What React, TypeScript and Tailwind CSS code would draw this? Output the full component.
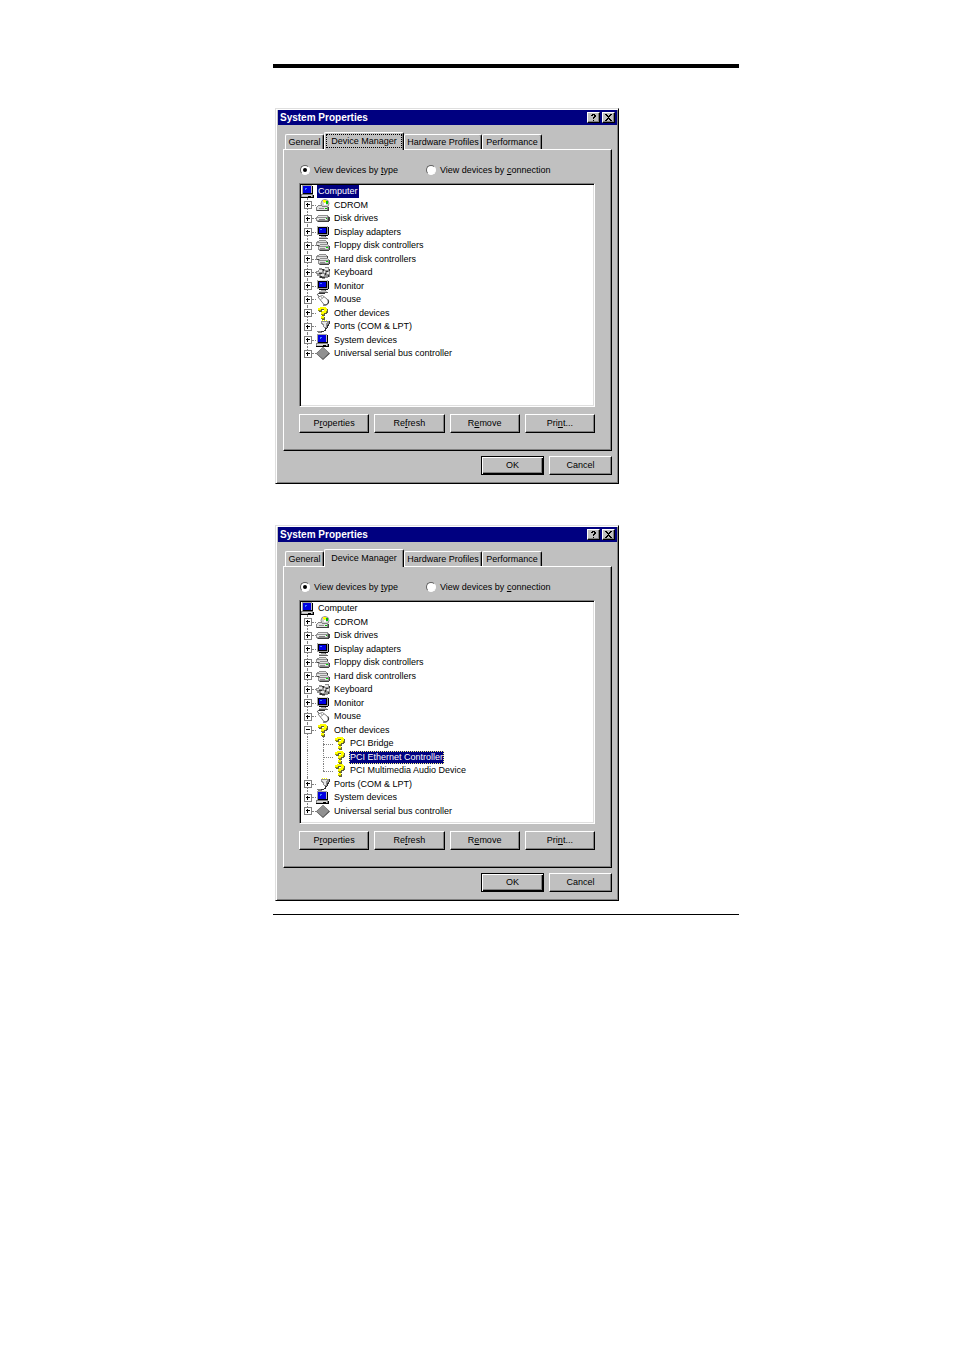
import { useId, useState } from 'react';
import type { ReactNode } from 'react';
import clsx from 'clsx';

type IconName =
  | 'computer' | 'cdrom' | 'disk' | 'monitor' | 'floppy' | 'keyboard'
  | 'mouse' | 'unknown' | 'port' | 'usb';

interface DeviceNode {
  label: string;
  icon: IconName;
  level: 0 | 1 | 2;
  open?: boolean;
}

const devices: DeviceNode[] = [
  { label: 'Computer', icon: 'computer', level: 0 },
  { label: 'CDROM', icon: 'cdrom', level: 1 },
  { label: 'Disk drives', icon: 'disk', level: 1 },
  { label: 'Display adapters', icon: 'monitor', level: 1 },
  { label: 'Floppy disk controllers', icon: 'floppy', level: 1 },
  { label: 'Hard disk controllers', icon: 'floppy', level: 1 },
  { label: 'Keyboard', icon: 'keyboard', level: 1 },
  { label: 'Monitor', icon: 'monitor', level: 1 },
  { label: 'Mouse', icon: 'mouse', level: 1 },
  { label: 'Other devices', icon: 'unknown', level: 1 },
  { label: 'Ports (COM & LPT)', icon: 'port', level: 1 },
  { label: 'System devices', icon: 'computer', level: 1 },
  { label: 'Universal serial bus controller', icon: 'usb', level: 1 },
];

const expandedDevices: DeviceNode[] = [
  ...devices.slice(0, 9),
  { ...devices[9], open: true },
  { label: 'PCI Bridge', icon: 'unknown', level: 2 },
  { label: 'PCI Ethernet Controller', icon: 'unknown', level: 2 },
  { label: 'PCI Multimedia Audio Device', icon: 'unknown', level: 2 },
  ...devices.slice(10),
];

const drawings: Record<IconName, ReactNode> = {
  computer: (
    <>
      <path fill="#a0a0a0" d="M1 0h10v9H1z" />
      <path fill="#000" d="M11 1h1v8H2V8h9z" />
      <path fill="#0000e0" d="M2 1h8v7H2z" />
      <path fill="#c0c0c0" d="M10 1h1v7h-1z" />
      <path fill="#4080ff" d="M4 3h2v1H5v1H4z" />
      <path fill="#808080" d="M0 9h12v3H0z" />
      <path fill="#dfdfdf" d="M1 10h10v1H1z" />
      <path fill="#c0c0c0" d="M1 11h10v1H1z" />
      <path fill="#000" d="M12 10h1v3H0v-1h12zM7 11h3v1H7z" />
    </>
  ),
  monitor: (
    <>
      <path fill="#a0a0a0" d="M1 0h11v9H1z" />
      <path fill="#dfdfdf" d="M2 0h9v1H2z" />
      <path fill="#000" d="M12 1h1v8h-1v1H3V9h9zM2 1h9v7H2z" />
      <path fill="#0000e0" d="M3 2h7v5H3z" />
      <path fill="#4080ff" d="M4 3h2v1H4z" />
      <path fill="#a0a0a0" d="M5 10h4v1H5z" />
      <path fill="#c0c0c0" d="M3 11h8v1H3z" />
      <path fill="#606060" d="M3 12h9v1H3zM9 10h1v1H9z" />
    </>
  ),
  cdrom: (
    <>
      <circle cx="9" cy="4.500" r="4" fill="#d0d0d0" stroke="#909090" shapeRendering="auto" />
      <path fill="#ffff00" d="M7 1h3v2H9v1H8V3H7z" />
      <path fill="#00c000" d="M10 2h2v3h-2z" />
      <path fill="#fff" d="M8 4h2v2H8z" />
      <path fill="#808080" d="M2 6h4v1h5v1h2v4H0V8h1V7h1z" />
      <path fill="#dfdfdf" d="M2 7h4v1h5v1H1V8h1zM1 9h10v2H1z" />
      <path fill="#404040" d="M12 8h1v4H1v-1h11z" />
      <path fill="#909090" d="M3 9h5v1H3z" />
      <path fill="#00c000" d="M9 9h2v1H9z" />
    </>
  ),
  disk: (
    <>
      <path fill="#909090" d="M2 3h10v1h1v5h-1v1H1V9H0V5h1V4h1z" />
      <path fill="#e8e8e8" d="M2 4h9v1H2zM1 6h10v2H1z" />
      <path fill="#404040" d="M13 5h1v4h-1v1H2V9h10V5z" />
      <path fill="#808080" d="M3 7h6v1H3z" />
      <path fill="#00c000" d="M10 6h1v1h-1z" />
    </>
  ),
  floppy: (
    <>
      <path fill="#909090" d="M3 1h7v1h1v1h1v4H0V3h1V2h2z" />
      <path fill="#dfdfdf" d="M3 2h7v1H3zM1 4h10v2H1z" />
      <path fill="#404040" d="M11 3h1v4H1V6h10z" />
      <path fill="#909090" d="M4 5h8v1h1v1h1v4h-1v1H3v-1H2V7h1V6h1z" />
      <path fill="#dfdfdf" d="M4 6h8v1H4zM3 8h9v2H3z" />
      <path fill="#404040" d="M13 7h1v4h-1v1H4v-1h9z" />
      <path fill="#909090" d="M4 9h5v1H4z" />
      <path fill="#00e000" d="M10 8h2v1h-2z" />
    </>
  ),
  keyboard: (
    <>
      <path fill="#909090" d="M3 2h3v1h3V1h4v2h1v8h-2v1H9v1H6v-1H3v-2H1V8H0V5h2V4h1z" />
      <path fill="#e8e8e8" d="M3 4h3v2H3zM9 2h3v2H9zM11 6h2v2h-2zM5 8h3v2H5zM8 5h1v2H8zM1 6h2v1H1z" />
      <path fill="#303030" d="M6 3h2v1H6zM3 7h3v1H3zM7 4h1v1H7zM10 5h2v1h-2zM9 7h1v2H9zM4 10h2v1h3v1H4zM12 9h1v2h-1zM13 3h1v2h-1z" />
    </>
  ),
  mouse: (
    <g shapeRendering="auto">
      <path fill="none" stroke="#303030" d="M9 .5H3C1 .5 1 2.500 3 3" />
      <path fill="#fff" stroke="#808080" d="M2 4l4.500-1.500L11 6c2.500 3 .5 6.500-3 5.500z" />
      <path fill="none" stroke="#a0a0a0" d="M4 7l4-3M6.500 5.500L5 3.500" />
      <path fill="none" stroke="#303030" d="M7 12c4 1 7-2 5-5.500" />
    </g>
  ),
  unknown: (
    <>
      <path fill="#606040" d="M5 1h6v1h1v4h-1v1H9v2H6V6h1V5h2V3H6v2H3V2h2zM6 10h3v3H6z" />
      <path fill="#ffff00" d="M4 0h6v1h1v4h-1v1H8v2H5V5h1V4h2V2H5v2H2V1h2zM5 9h3v3H5z" />
      <path fill="#a0a000" d="M2 3h3v1H2zM5 7h3v1H5zM5 11h3v1H5zM10 4h1v1h-1z" />
    </>
  ),
  port: (
    <>
      <path fill="#909090" d="M5 1h8v3h-1v3h-1v1H8V7H7V5H6V4H5z" />
      <path fill="#e8e8e8" d="M6 2h5v1H6zM7 3h3v1H7zM8 4h2v3H8z" />
      <path fill="#ffff00" d="M6 0h1v1H6zM8 0h1v1H8zM10 0h1v1h-1z" />
      <path fill="#303030" d="M13 1h1v3h-1zM12 4h1v2h-1v2h-1V5h1zM9 8h2v1h-1v2H8v1H5v-1h3v-1h1z" />
      <path fill="#808080" d="M1 11h4v1H1zM2 12h4v1H2z" />
    </>
  ),
  usb: (
    <g shapeRendering="auto">
      <path fill="#404040" d="M7 0l7 6.500L7 13 0 6.500z" />
      <path fill="#909090" d="M7 0l6 6-6 6-6.500-5.500z" />
    </g>
  ),
};

const DeviceIcon = ({ name }: { name: IconName }) => (
  <svg viewBox="0 0 14 13" shapeRendering="crispEdges" className="h-[13px] w-[14px] shrink-0" aria-hidden="true">
    {drawings[name]}
  </svg>
);

interface TreeRowProps {
  node: DeviceNode;
  isLast: boolean;
  isLastChild: boolean;
  selected: boolean;
  focused: boolean;
  onSelect: () => void;
}

const TreeRow = ({ node, isLast, isLastChild, selected, focused, onSelect }: TreeRowProps) => (
  <li className="flex items-center odd:h-[13px] even:h-[14px]">
    {node.level > 0 && (
      <span className="relative flex w-[15px] shrink-0 items-center self-stretch pl-[3px]">
        <span className={clsx('absolute top-0 left-[6px] border-l border-dotted border-[#808080]', isLast ? 'h-1/2' : 'h-full')} />
        {node.level === 1 && (
          <>
            <span className="absolute right-0 left-[11px] border-t border-dotted border-[#808080]" />
            <svg viewBox="0 0 8 8" shapeRendering="crispEdges" className="relative size-2" aria-hidden="true">
              <path fill="#808080" d="M0 0h8v8H0z" />
              <path fill="#fff" d="M1 1h6v6H1z" />
              <path fill="#000" d={node.open ? 'M2 3h4v1H2z' : 'M2 3h4v1H2zM3 2h1v4H3z'} />
            </svg>
          </>
        )}
      </span>
    )}
    {node.level === 2 && (
      <span className="relative w-[17px] shrink-0 self-stretch">
        <span className={clsx('absolute top-0 left-[7px] border-l border-dotted border-[#808080]', isLastChild ? 'h-1/2' : 'h-full')} />
        <span className="absolute top-1/2 right-0 left-[7px] border-t border-dotted border-[#808080]" />
      </span>
    )}
    <DeviceIcon name={node.icon} />
    <button
      type="button"
      onClick={onSelect}
      className={clsx(
        'h-[13px] px-px leading-[13px] whitespace-nowrap',
        node.level === 1 ? 'ml-[3px]' : 'ml-[2px]',
        selected && 'bg-[#000080] text-white',
        selected && focused && 'outline-1 -outline-offset-1 outline-dotted outline-[#ffff80]',
      )}
    >
      {node.label}
    </button>
  </li>
);

const PushButton = ({ children, isDefault = false, className }: { children: ReactNode; isDefault?: boolean; className?: string }) => (
  <button
    type="button"
    className={clsx(
      'h-[19px] border bg-[#c0c0c0] pb-px text-center leading-[16px]',
      isDefault
        ? 'border-black shadow-[inset_1px_1px_#fff,inset_-1px_-1px_#000,inset_-2px_-2px_#808080]'
        : 'border-t-white border-r-black border-b-black border-l-white shadow-[inset_-1px_-1px_#808080]',
      className,
    )}
  >
    {children}
  </button>
);

const TitleButton = ({ label, children }: { label: string; children: ReactNode }) => (
  <button
    type="button"
    aria-label={label}
    className="flex h-[11px] w-[13px] items-center justify-center border border-t-white border-r-black border-b-black border-l-white bg-[#c0c0c0] shadow-[inset_-1px_-1px_#808080]"
  >
    <svg viewBox="0 0 7 7" shapeRendering="crispEdges" className="size-[7px]" aria-hidden="true">
      {children}
    </svg>
  </button>
);

const tabs = [
  { label: 'General', width: 'w-[39px]' },
  { label: 'Device Manager', width: 'w-[80px]' },
  { label: 'Hardware Profiles', width: 'w-[78px]' },
  { label: 'Performance', width: 'w-[60px]' },
];

interface SystemPropertiesProps {
  nodes: DeviceNode[];
  initialSelected: string | null;
  tabFocused?: boolean;
}

const SystemProperties = ({ nodes, initialSelected, tabFocused = false }: SystemPropertiesProps) => {
  const [selected, setSelected] = useState(initialSelected);
  const [view, setView] = useState('type');
  const id = useId();

  const radioClass =
    "flex size-[10px] appearance-none items-center justify-center rounded-full border border-t-[#606060] border-r-white border-b-white border-l-[#606060] bg-white checked:before:size-1 checked:before:rounded-full checked:before:bg-black checked:before:content-['']";

  return (
    <section className="w-full max-w-[344px] border border-t-[#dfdfdf] border-r-black border-b-black border-l-[#dfdfdf] bg-[#c0c0c0] pt-px pr-px pb-2 pl-[2px] shadow-[inset_1px_1px_#fff,inset_-1px_-1px_#808080]">
      <header className="flex h-[15px] items-center bg-[#000080] px-[2px] text-white">
        <h2 className="flex-1 text-[10px] leading-[15px] font-bold">System Properties</h2>
        <div className="flex gap-[2px]">
          <TitleButton label="Help">
            <path fill="#000" d="M2 0h3v1h1v2H5v1H4v1H3V3h1V1H3v1H1V1h1zM3 6h1v1H3z" />
          </TitleButton>
          <TitleButton label="Close">
            <path fill="#000" d="M0 0h2v1h1v1h1V1h1V0h2v1H6v1H5v1H4v1h1v1h1v1h1v1H5V6H4V5H3v1H2v1H0V6h1V5h1V4h1V3H2V2H1V1H0z" />
          </TitleButton>
        </div>
      </header>

      <div className="px-[5px] pt-[7px]">
        <div className="flex h-[17px] items-end pl-[2px]" role="tablist">
          {tabs.map(tab => {
            const active = tab.label === 'Device Manager';
            return (
              <button
                key={tab.label}
                type="button"
                role="tab"
                aria-selected={active}
                className={clsx(
                  'flex items-center justify-center rounded-t-xs border-t border-r border-l border-t-white border-r-black border-l-white bg-[#c0c0c0] whitespace-nowrap shadow-[inset_-1px_0_#808080]',
                  active ? 'relative -mb-px h-[18px] pb-[2px]' : 'h-[15px]',
                  tab.width,
                )}
              >
                <span className={clsx('border border-dotted px-1 leading-[12px]', active && tabFocused ? 'border-black' : 'border-transparent')}>
                  {tab.label}
                </span>
              </button>
            );
          })}
        </div>

        <div className="border border-t-white border-r-black border-b-black border-l-white pt-[13px] pr-4 pb-[17px] pl-[15px] shadow-[inset_-1px_-1px_#808080]">
          <div className="flex h-[14px] items-center pl-px">
            <label htmlFor={`${id}-type`} className="flex w-[126px] items-center gap-1 whitespace-nowrap">
              <input id={`${id}-type`} type="radio" name={id} checked={view === 'type'} onChange={() => setView('type')} className={radioClass} />
              <span>View devices by <u>t</u>ype</span>
            </label>
            <label htmlFor={`${id}-connection`} className="flex items-center gap-1 whitespace-nowrap">
              <input id={`${id}-connection`} type="radio" name={id} checked={view === 'connection'} onChange={() => setView('connection')} className={radioClass} />
              <span>View devices by <u>c</u>onnection</span>
            </label>
          </div>

          <ul className="mt-[6px] min-h-[224px] border border-t-[#808080] border-r-white border-b-white border-l-[#808080] bg-white p-px shadow-[inset_1px_1px_#000,inset_-1px_-1px_#dfdfdf]">
            {nodes.map((node, i) => (
              <TreeRow
                key={node.label}
                node={node}
                isLast={i === nodes.length - 1}
                isLastChild={nodes[i + 1]?.level !== 2}
                selected={selected === node.label}
                focused={!tabFocused}
                onSelect={() => setSelected(node.label)}
              />
            ))}
          </ul>

          <div className="mt-[7px] grid grid-cols-4 gap-[5px]">
            <PushButton>P<u>r</u>operties</PushButton>
            <PushButton>Re<u>f</u>resh</PushButton>
            <PushButton>R<u>e</u>move</PushButton>
            <PushButton>Pri<u>n</u>t...</PushButton>
          </div>
        </div>

        <div className="mt-[5px] flex justify-end gap-[5px]">
          <PushButton isDefault className="w-[63px]">OK</PushButton>
          <PushButton className="w-[63px]">Cancel</PushButton>
        </div>
      </div>
    </section>
  );
};

export default function App() {
  return (
    <main className="min-h-screen bg-white pt-16 pr-[215px] pl-[273px] font-['Liberation_Sans',Arial,sans-serif] text-[9px] leading-[13px] text-black">
      <div className="border-t-4 border-b border-black pt-10 pb-[13px] pl-[2px]">
        <div className="flex flex-col gap-[41px]">
          <SystemProperties nodes={devices} initialSelected="Computer" tabFocused />
          <SystemProperties nodes={expandedDevices} initialSelected="PCI Ethernet Controller" />
        </div>
      </div>
    </main>
  );
}
